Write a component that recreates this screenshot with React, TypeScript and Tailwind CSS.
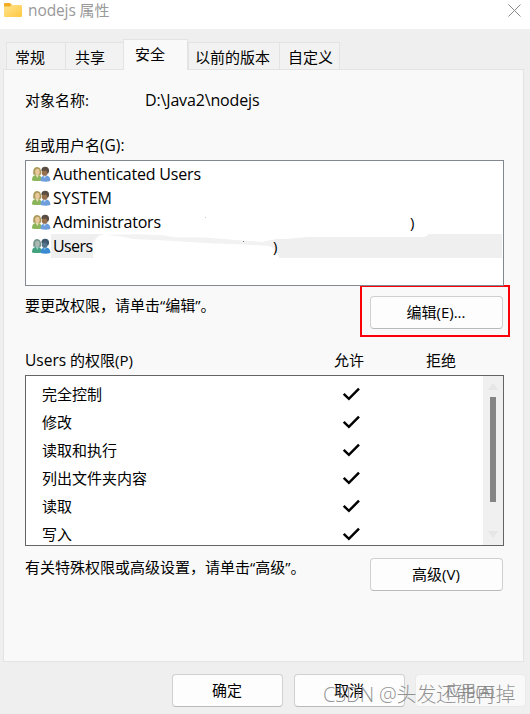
import { twJoin } from "tailwind-merge";

const tabs = [
  { name: "常规", className: "w-[59px] pl-[8px]" },
  { name: "共享", className: "w-[58px] pl-[9px]" },
  { name: "安全", className: "w-[65px] pl-[11px]", active: true },
  { name: "以前的版本", className: "w-[91px] pl-[6px]" },
  { name: "自定义", className: "w-[61px] pl-[8px]" },
];

const groups = [
  { name: "Authenticated Users", width: 148 },
  { name: "SYSTEM", width: 59 },
  { name: "Administrators", width: 108 },
  { name: "Users", width: 40, selected: true },
];

const permissions = [
  "完全控制",
  "修改",
  "读取和执行",
  "列出文件夹内容",
  "读取",
  "写入",
];

interface DialogButtonProps {
  label: string;
  className?: string;
}

const DialogButton: React.FC<DialogButtonProps> = ({ label, className }) => {
  return (
    <button
      className={twJoin(
        "flex h-[33px] shrink-0 items-center justify-center rounded-[4px] border border-[#d0d0d0] border-b-[#bababa] bg-[#fdfdfd] pr-px pb-[2px]",
        className,
      )}
    >
      {label}
    </button>
  );
};

const FolderIcon = () => (
  <svg width="19" height="16" viewBox="0 0 19 16" className="shrink-0">
    <defs>
      <linearGradient id="folder" x1="0" y1="0" x2="1" y2="1">
        <stop offset="0" stopColor="#ffe391" />
        <stop offset="1" stopColor="#ffc93f" />
      </linearGradient>
    </defs>
    <path d="M2 1h5l2 2h8v5H1V2q0-1 1-1z" fill="#f3ad24" />
    <path
      d="M1 4.500h6L8.500 3h9q1.500 0 1.500 1v10q0 1-1 1H2q-1 0-1-1z"
      fill="url(#folder)"
    />
  </svg>
);

const UsersIcon = ({ selected = false }: { selected?: boolean }) => (
  <svg width="19" height="17" viewBox="0 0 19 17" className="shrink-0">
    <path
      d="M0 14.500C0 10.500 1.500 9 4.800 9s5 1.500 5 5.500q-5 1-9.800 0z"
      fill={selected ? "#42a27d" : "#8cb55b"}
    />
    <path d="M3.500 8.500h3.500l-1.600 3.500z" fill={selected ? "#9ccbd0" : "#efe2bb"} />
    <path
      d="M1.200 8.500Q.5 1 5 1t4.200 7L8 9.500z"
      fill={selected ? "#75958d" : "#a99855"}
    />
    <ellipse cx="5.400" cy="5.900" rx="2.300" ry="3.100" fill={selected ? "#a8bab3" : "#e8c99d"} />
    <path
      d="M8.600 15C8.600 11 10.200 9.600 13.400 9.600s5 1.800 5 5.400q-4.900 1.500-9.800 0z"
      fill={selected ? "#398ad0" : "#6d9edb"}
    />
    <path d="M11 9.200h3.600l-2 3z" fill={selected ? "#78bce8" : "#c8def3"} />
    <ellipse cx="12.700" cy="5.900" rx="3" ry="3.900" fill={selected ? "#55758b" : "#98704e"} />
    <path
      d="M9.300 4.500Q9.600.8 13 .8q4.600 0 4 5l-1.200 2.500-1.500-3.700q-2.500.2-5 .2z"
      fill={selected ? "#3e586e" : "#594c43"}
    />
  </svg>
);

const CheckIcon = () => (
  <svg width="19" height="14" viewBox="0 0 19 14" fill="none">
    <path d="M1.700 6.800l5.200 5L17 1.700" stroke="#000" strokeWidth="2.500" />
  </svg>
);

// White brush strokes that hide the account details
const BrushMask = () => (
  <svg
    width="477"
    height="124"
    viewBox="0 0 477 124"
    className="absolute top-0 left-0"
  >
    <path
      d="M67 98V84q2-10 12-11h323q0 2-4 3H282l-22 2h-10l-12 3-4 3q8-1 13 3l6 8-1 6z"
      fill="#fff"
    />
    <path
      d="M80 74q30-1.500 57 .2l12 2 30 .3 34 2.700 23 1.800q5-1 9-2l8 4-4 2.500q-24-2-61-3l-49-3-32-1.500q-10-3-27-4z"
      fill="#f2f2f2"
    />
    <rect x="179" y="56" width="1" height="1" fill="#ccc" />
    <rect x="217" y="80" width="1" height="1" fill="#777" />
  </svg>
);

const App = () => {
  return (
    <div className="relative flex h-[714px] w-[530px] flex-col overflow-hidden bg-[#efefef] font-['Open_Sans','Noto_Sans_CJK_SC',sans-serif] text-[15px] leading-5 text-black">
      <header className="flex h-[29px] shrink-0 items-start justify-between bg-white pr-[9px] pl-[3px]">
        <div className="flex items-center text-[#999]">
          <FolderIcon />
          <span className="ml-[6px]">
            <span className="text-[15.5px] tracking-[-0.100px]">nodejs</span> 属性
          </span>
        </div>
        <svg width="13" height="13" viewBox="0 0 13 13" className="mt-[4px]">
          <path d="M.5.500l12 12m0-12l-12 12" stroke="#888" />
        </svg>
      </header>

      <nav className="z-10 flex h-[41px] shrink-0 items-end pl-[6px]">
        {tabs.map((tab) => (
          <div
            key={tab.name}
            className={twJoin(
              "shrink-0 border-t border-[#e3e3e3] whitespace-nowrap",
              tab.className,
              tab.active
                ? "h-[31px] border-x bg-[#f9f9f9] pt-[4px]"
                : "h-[28px] border-b border-l bg-[#f2f2f2] pt-[4px] last:border-r",
            )}
          >
            {tab.name}
          </div>
        ))}
      </nav>

      <main className="-mt-px ml-[3px] flex h-[593px] w-[521px] shrink-0 flex-col border border-[#e3e3e3] bg-[#f9f9f9] pr-[20px] pl-[21px]">
        <div className="mt-[20px] flex h-5">
          <span className="w-[120px]">对象名称:</span>
          <span className="text-[16px] tracking-[-0.150px]">D:\Java2\nodejs</span>
        </div>
        <div className="mt-[25px] h-5">
          组或用户名<span className="text-[15.5px]">(G):</span>
        </div>

        <div className="relative mt-[5px] h-[126px] w-[479px] shrink-0 border border-[#828790] bg-white pt-px">
          {groups.map((group) => (
            <div key={group.name} className="flex h-6 items-center pr-px pl-[6px]">
              <UsersIcon selected={group.selected} />
              <div
                className={twJoin(
                  "flex h-6 flex-1 items-center pl-[2px]",
                  group.selected && "bg-[#efefef]",
                )}
              >
                <svg width="160" height="24" className="overflow-visible text-[16px]">
                  <text x="0" y="17.500" textLength={group.width}>
                    {group.name}
                  </text>
                </svg>
              </div>
            </div>
          ))}
          <BrushMask />
          <span className="absolute top-[51px] left-[384px]">)</span>
          <span className="absolute top-[75px] left-[247px]">)</span>
        </div>

        <div className="flex h-[52px] shrink-0 items-start justify-between">
          <span className="mt-[9px]">要更改权限，请单击“编辑”。</span>
          <div className="-mt-px -mr-[7px] flex h-[52px] w-[150px] border-2 border-[#fb0007] pt-[9px] pl-[8px]">
            <DialogButton label="编辑(E)..." className="w-[133px]" />
          </div>
        </div>

        <div className="mt-[12px] flex h-5 shrink-0">
          <span className="w-[309px]">
            <span className="text-[15.5px]">Users</span> 的权限(P)
          </span>
          <span className="w-[92px]">允许</span>
          <span>拒绝</span>
        </div>

        <div className="mt-[5px] flex h-[171px] w-[479px] shrink-0 overflow-hidden border border-[#646464] bg-white">
          <div className="flex-1 pt-[4px]">
            {permissions.map((permission) => (
              <div key={permission} className="flex h-7 items-center pl-4">
                <span className="w-[300px]">{permission}</span>
                <CheckIcon />
              </div>
            ))}
          </div>
          <div className="flex w-[20px] flex-col items-center bg-[#f0f0f0] pt-[7px]">
            <svg width="10" height="8">
              <path d="M0 7l4-6h2l4 6z" fill="#e6e6e6" />
            </svg>
            <div className="mt-[6px] h-[105px] w-[6px] bg-[#858585]" />
            <svg width="10" height="8" className="mt-[28px]">
              <path d="M0 1l4 6h2l4-6z" fill="#e6e6e6" />
            </svg>
          </div>
        </div>

        <div className="mt-[12px] flex items-start justify-between">
          <span className="-mt-px">有关特殊权限或高级设置，请单击“高级”。</span>
          <DialogButton label="高级(V)" className="w-[133px]" />
        </div>
      </main>

      <footer className="mt-[12px] flex gap-[11px] pl-[172px]">
        <DialogButton label="确定" className="w-[111px]" />
        <DialogButton label="取消" className="w-[111px]" />
        <DialogButton
          label="应用(A)"
          className="-ml-px w-[111px] border-[#eaeaea]! bg-[#f9f9f9]! text-[#999]"
        />
      </footer>

      <div className="absolute top-[681px] left-[323px] text-[20px] leading-7 font-light tracking-[-0.200px] whitespace-nowrap text-[#777]/80">
        CSDN @头发还能再掉
      </div>
    </div>
  );
};

export default App;
